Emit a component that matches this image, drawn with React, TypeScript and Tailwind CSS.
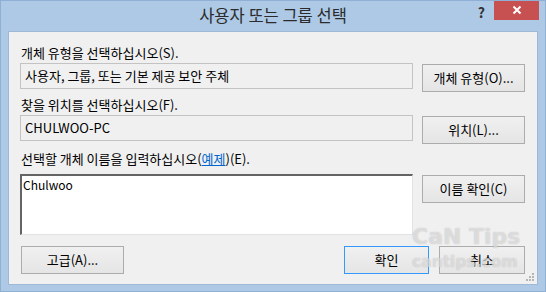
import React from "react";

const font = "font-['Noto_Sans_CJK_KR','Noto_Sans',sans-serif]";

function Button({ label, width, focused = false, className = "" }: { label: React.ReactNode; width: string; focused?: boolean; className?: string }) {
  return (
    <div
      className={`flex h-[28px] ${width} shrink-0 items-center justify-center border bg-linear-to-b from-[#f0f0f0] to-[#e5e5e5] text-[13px] text-black ${
        focused ? "border-[#3399ff]" : "border-[#acacac]"
      } ${className}`}
    >
      {label}
    </div>
  );
}

function ReadBox({ text }: { text: string }) {
  return (
    <div className="flex h-[26px] w-[393px] shrink-0 items-center border border-[#c3c3c3] bg-[#f0f0f0] pl-[4px] text-[13px] text-black">
      {text}
    </div>
  );
}

export default function App() {
  return (
    <div className={`relative h-[292px] w-[546px] overflow-hidden border border-[#8fafd4] bg-[#adc9e6] ${font}`}>
      {/* title bar */}
      <div className="flex h-[30px] items-start">
        <div className="flex-1 basis-0" />
        <div className="pt-[4px] text-[16.5px] leading-[20px] text-[#2b2b2b]">사용자 또는 그룹 선택</div>
        <div className="flex flex-1 basis-0 items-start justify-end">
          <span className="mt-[2px] mr-[9px] text-[14px] leading-[18px] font-bold text-[#333]">?</span>
          <div className="mr-[6px] -mt-px flex h-[20px] w-[45px] items-center justify-center bg-[#c75050]">
            <svg width="10" height="10" viewBox="0 0 10 10">
              <path d="M1.5 1.5 L8.5 8.5 M8.5 1.5 L1.5 8.5" stroke="#fff" strokeWidth="2" />
            </svg>
          </div>
        </div>
      </div>

      {/* client area */}
      <div className="relative mx-[7px] h-[254px] border border-[#9fb8d6] bg-[#f0f0f0] pt-[13px] pl-[11px] text-[13px] text-black">
        <div className="h-[16px] pl-px leading-[16px]">개체 유형을 선택하십시오(S).</div>
        <div className="mt-[2px] flex h-[29px] items-start">
          <ReadBox text="사용자, 그룹, 또는 기본 제공 보안 주체" />
          <Button label="개체 유형(O)..." width="w-[103px]" className="mt-px ml-[9px]" />
        </div>

        <div className="mt-[5px] h-[16px] pl-px leading-[16px]">찾을 위치를 선택하십시오(F).</div>
        <div className="mt-[2px] flex h-[29px] items-start">
          <ReadBox text="CHULWOO-PC" />
          <Button label="위치(L)..." width="w-[103px]" className="mt-px ml-[9px]" />
        </div>

        <div className="mt-[7px] h-[16px] pl-px leading-[16px]">
          선택할 개체 이름을 입력하십시오(<span className="text-[#0066cc] underline">예제</span>)(E).
        </div>
        <div className="mt-[7px] flex items-start">
          <div className="h-[61px] w-[393px] shrink-0 border-t-2 border-l-2 border-r border-b border-t-[#646464] border-l-[#646464] border-r-[#e3e3e3] border-b-[#e3e3e3] bg-white pt-px pl-[1px] text-[12px] leading-[16px]">
            Chulwoo
          </div>
          <Button label="이름 확인(C)" width="w-[103px]" className="mt-px ml-[9px]" />
        </div>

        <div className="mt-[11px] flex items-start">
          <Button label="고급(A)..." width="w-[103px]" className="ml-px" />
          <div className="flex-1" />
          <Button label="확인" width="w-[85px]" focused />
          <Button label="취소" width="w-[86px]" className="mr-[12px] ml-[10px]" />
        </div>

        <svg className="absolute right-[2px] bottom-[2px]" width="10" height="10" viewBox="0 0 10 10">
          <rect x="7" y="1" width="2" height="2" fill="#b5b5b5" />
          <rect x="4" y="4" width="2" height="2" fill="#b5b5b5" />
          <rect x="7" y="4" width="2" height="2" fill="#b5b5b5" />
          <rect x="1" y="7" width="2" height="2" fill="#b5b5b5" />
          <rect x="4" y="7" width="2" height="2" fill="#b5b5b5" />
          <rect x="7" y="7" width="2" height="2" fill="#b5b5b5" />
        </svg>
      </div>

      {/* watermark */}
      <div className="pointer-events-none absolute top-[222px] left-[411px] flex flex-col font-['DejaVu_Sans',sans-serif] font-bold text-white/55 [text-shadow:0_0_1px_rgba(90,90,90,0.45)]">
        <span className="text-[22px] leading-[28px]">CaN Tips</span>
        <span className="mt-[1px] text-[15.5px] leading-[20px]">cantips.com</span>
      </div>
    </div>
  );
}
